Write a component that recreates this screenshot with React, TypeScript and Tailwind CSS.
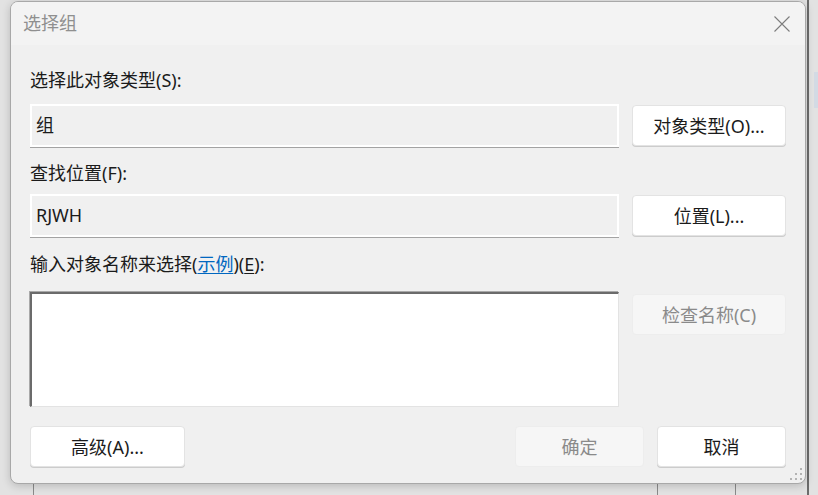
import React from 'react';

const font = "font-['Noto_Sans','Noto_Sans_CJK_SC',sans-serif]";

function Btn({ label, className = '', disabled = false }: { label: React.ReactNode; className?: string; disabled?: boolean }) {
  return (
    <button
      type="button"
      disabled={disabled}
      className={
        'h-[41px] rounded-[4px] border text-[18px] leading-none ' +
        (disabled
          ? 'bg-[#f6f6f6] border-[#ededed] text-[#8a8a8a]'
          : 'bg-white border-[#e3e3e3] text-[#1b1b1b] shadow-[0_1px_0_#cccccc]') +
        ' ' +
        className
      }
    >
      {label}
    </button>
  );
}

function ReadField({ value }: { value: string }) {
  return (
    <div className="flex-1 h-[43px] bg-[#f0f0f0] border-2 border-white shadow-[0_1px_0_#a3a3a3] flex items-start pl-[4px] pt-[6px] text-[18px] text-[#1b1b1b]">
      {value}
    </div>
  );
}

export default function App() {
  return (
    <div className={`relative w-[818px] h-[495px] overflow-hidden bg-[#e2e2e2] ${font}`}>
      {/* window behind the dialog */}
      <div className="absolute left-[807px] top-0 w-[2px] h-full bg-[#6c6c6c]" />
      <div className="absolute left-[814px] top-[72px] w-[4px] h-[36px] bg-[#d3dae4]" />
      <div className="absolute left-[33px] top-[480px] w-[1px] h-[15px] bg-[#8a8a8a]" />
      <div className="absolute left-[657px] top-[480px] w-[1px] h-[15px] bg-[#8a8a8a]" />
      <div className="absolute left-[735px] top-[480px] w-[1px] h-[15px] bg-[#8a8a8a]" />

      {/* dialog */}
      <div className="absolute left-[10px] top-[1px] w-[796px] h-[483px] bg-[#f0f0f0] border border-[#a8a8a8] rounded-[8px] shadow-[0_2px_8px_rgba(0,0,0,0.18)] flex flex-col overflow-hidden">
        <div className="h-[43px] bg-[#f3f3f3] flex items-center justify-between pl-[12px] pr-[15px]">
          <span className="text-[18px] text-[#8f8f8f]">选择组</span>
          <svg width="16" height="16" viewBox="0 0 16 16" className="mt-[1px]">
            <path d="M0.5 0.5 L15.5 15.5 M15.5 0.5 L0.5 15.5" stroke="#7d7d7d" strokeWidth="1.1" fill="none" />
          </svg>
        </div>

        <div className="flex-1 flex flex-col pl-[19px] pr-[19px] pt-[23px] text-[18px] text-[#1b1b1b]">
          <div className="h-[24px] leading-[24px]">选择此对象类型(S):</div>
          <div className="mt-[12px] flex items-center gap-[13px]">
            <ReadField value="组" />
            <Btn label="对象类型(O)..." className="w-[154px]" />
          </div>

          <div className="mt-[14px] h-[24px] leading-[24px]">查找位置(F):</div>
          <div className="mt-[9px] flex items-center gap-[13px]">
            <ReadField value="RJWH" />
            <Btn label="位置(L)..." className="w-[154px]" />
          </div>

          <div className="mt-[15px] h-[24px] leading-[24px]">
            输入对象名称来选择(<span className="text-[#0067c0] underline underline-offset-2">示例</span>)(<span className="underline underline-offset-2">E</span>):
          </div>
          <div className="mt-[16px] flex items-start gap-[13px]">
            <div className="flex-1 h-[115px] bg-white shadow-[-1px_-1px_0_#a9a9a9] border-t-[2px] border-l-[2px] border-r border-b border-t-[#6b6b6b] border-l-[#6b6b6b] border-r-[#e3e3e3] border-b-[#e3e3e3]" />
            <Btn label="检查名称(C)" disabled className="w-[154px] mt-[2px]" />
          </div>

          <div className="mt-[19px] flex items-center">
            <Btn label="高级(A)..." className="w-[155px]" />
            <div className="flex-1" />
            <Btn label="确定" disabled className="w-[129px]" />
            <Btn label="取消" className="w-[129px] ml-[13px]" />
          </div>
        </div>

        {/* resize grip */}
        <svg width="14" height="14" viewBox="0 0 14 14" className="absolute right-[2px] bottom-[2px]">
          <rect x="11" y="1" width="2" height="2" fill="#b3b3b3" />
          <rect x="6" y="6" width="2" height="2" fill="#b3b3b3" />
          <rect x="11" y="6" width="2" height="2" fill="#b3b3b3" />
          <rect x="1" y="11" width="2" height="2" fill="#b3b3b3" />
          <rect x="6" y="11" width="2" height="2" fill="#b3b3b3" />
          <rect x="11" y="11" width="2" height="2" fill="#b3b3b3" />
        </svg>
      </div>
    </div>
  );
}
